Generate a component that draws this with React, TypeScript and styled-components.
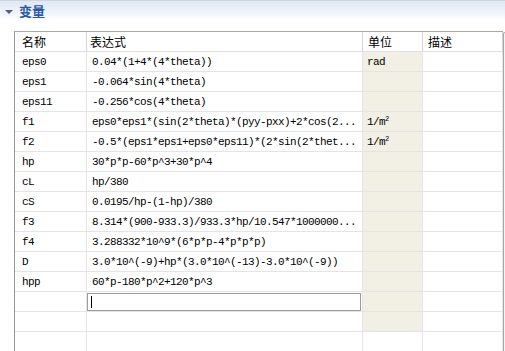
import * as React from "react";
import styled, { createGlobalStyle } from "styled-components";

const GlobalStyle = createGlobalStyle`
	html, body {
		margin: 0;
		padding: 0;
		background: #ffffff;
	}
	body {
		width: 505px;
		height: 351px;
		overflow: hidden;
		font-family: "Noto Sans CJK SC", "DejaVu Sans", sans-serif;
	}
`;

const Page = styled.div`
	width: 505px;
	height: 351px;
	overflow: hidden;
	display: flex;
	flex-direction: column;
`;

const SectionBar = styled.div`
	height: 21px;
	flex: none;
	display: flex;
	align-items: center;
	gap: 6px;
	padding-left: 5px;
	border-top: 1px solid #cbd6e3;
	background: linear-gradient(to bottom, #dfe8f4 0%, #eef3f9 55%, #ffffff 100%);
	box-sizing: border-box;
`;

const Arrow = styled.span`
	width: 0;
	height: 0;
	border-left: 4px solid transparent;
	border-right: 4px solid transparent;
	border-top: 4px solid #50627a;
	margin-top: 1px;
`;

const Title = styled.span`
	font-size: 13px;
	font-weight: bold;
	color: #2a58a8;
	line-height: 14px;
`;

const Body = styled.div`
	flex: 1;
	display: flex;
	padding: 10px 0 0 14px;
	min-height: 0;
`;

const Grid = styled.div`
	display: flex;
	flex-direction: column;
	border-left: 1px solid #9a9a9a;
	border-top: 1px solid #a9a9a9;
`;

const Row = styled.div`
	display: flex;
	height: 19px;
	border-bottom: 1px solid #e4e4e4;
	flex: none;
`;

const HeadRow = styled(Row)`
	border-bottom-color: #e0e0e0;
`;

const HeadCell = styled.div<{ $w: number; $pad: number }>`
	width: ${(p) => p.$w}px;
	box-sizing: border-box;
	border-right: 1px solid #d4d4d4;
	padding-left: ${(p) => p.$pad}px;
	font-size: 12px;
	line-height: 19px;
	color: #000;
	white-space: nowrap;
`;

const Cell = styled.div<{ $w: number; $pad: number; $shade?: boolean }>`
	width: ${(p) => p.$w}px;
	box-sizing: border-box;
	border-right: 1px solid #e6e6e6;
	padding-left: ${(p) => p.$pad}px;
	padding-top: 1px;
	background: ${(p) => (p.$shade ? "#f2efe5" : "transparent")};
	font-family: "Liberation Mono", "DejaVu Sans Mono", monospace;
	font-size: 11px;
	letter-spacing: -0.6px;
	line-height: 18px;
	color: #000;
	white-space: nowrap;
	overflow: hidden;
	display: flex;
	align-items: center;
`;

const Text = styled.span`
	white-space: nowrap;
`;

const EditBox = styled.div`
	flex: 1;
	height: 18px;
	margin: 0 1px 0 -5px;
	box-sizing: border-box;
	border: 1px solid #9c9c9c;
	display: flex;
	align-items: center;
	padding-left: 3px;
	background: #fff;
`;

const Caret = styled.span`
	width: 1px;
	height: 12px;
	background: #000;
`;

const Sup = styled.sup`
	font-size: 7px;
	line-height: 0;
	vertical-align: 4px;
	letter-spacing: 0;
`;

const ScrollEdge = styled.div`
	width: 2px;
	margin-top: 1px;
	border-left: 1px solid #a6a6a6;
	border-top: 1px solid #a6a6a6;
	border-top-left-radius: 2px;
	background: #f4f4f4;
`;

const cols = [
	{ w: 72, hp: 7, bp: 7 },
	{ w: 276, hp: 3, bp: 5 },
	{ w: 60, hp: 5, bp: 4 },
	{ w: 80, hp: 5, bp: 4 },
];

const m2 = (
	<Text>
		1/m<Sup>2</Sup>
	</Text>
);

const rows: [string, string, React.ReactNode][] = [
	["eps0", "0.04*(1+4*(4*theta))", "rad"],
	["eps1", "-0.064*sin(4*theta)", ""],
	["eps11", "-0.256*cos(4*theta)", ""],
	["f1", "eps0*eps1*(sin(2*theta)*(pyy-pxx)+2*cos(2...", m2],
	["f2", "-0.5*(eps1*eps1+eps0*eps11)*(2*sin(2*thet...", m2],
	["hp", "30*p*p-60*p^3+30*p^4", ""],
	["cL", "hp/380", ""],
	["cS", "0.0195/hp-(1-hp)/380", ""],
	["f3", "8.314*(900-933.3)/933.3*hp/10.547*1000000...", ""],
	["f4", "3.288332*10^9*(6*p*p-4*p*p*p)", ""],
	["D", "3.0*10^(-9)+hp*(3.0*10^(-13)-3.0*10^(-9))", ""],
	["hpp", "60*p-180*p^2+120*p^3", ""],
];

export default function App() {
	return (
		<Page>
			<GlobalStyle />
			<SectionBar>
				<Arrow />
				<Title>变量</Title>
			</SectionBar>
			<Body>
				<Grid>
					<HeadRow>
						<HeadCell $w={cols[0].w} $pad={cols[0].hp}>名称</HeadCell>
						<HeadCell $w={cols[1].w} $pad={cols[1].hp}>表达式</HeadCell>
						<HeadCell $w={cols[2].w} $pad={cols[2].hp}>单位</HeadCell>
						<HeadCell $w={cols[3].w} $pad={cols[3].hp}>描述</HeadCell>
					</HeadRow>
					{rows.map(([name, expr, unit]) => (
						<Row key={name}>
							<Cell $w={cols[0].w} $pad={cols[0].bp}>{name}</Cell>
							<Cell $w={cols[1].w} $pad={cols[1].bp}>{expr}</Cell>
							<Cell $w={cols[2].w} $pad={cols[2].bp} $shade>{unit}</Cell>
							<Cell $w={cols[3].w} $pad={cols[3].bp} />
						</Row>
					))}
					<Row>
						<Cell $w={cols[0].w} $pad={cols[0].bp} />
						<Cell $w={cols[1].w} $pad={cols[1].bp}>
							<EditBox>
								<Caret />
							</EditBox>
						</Cell>
						<Cell $w={cols[2].w} $pad={cols[2].bp} $shade />
						<Cell $w={cols[3].w} $pad={cols[3].bp} />
					</Row>
					<Row>
						<Cell $w={cols[0].w} $pad={cols[0].bp} />
						<Cell $w={cols[1].w} $pad={cols[1].bp} />
						<Cell $w={cols[2].w} $pad={cols[2].bp} $shade />
						<Cell $w={cols[3].w} $pad={cols[3].bp} />
					</Row>
					<Row>
						<Cell $w={cols[0].w} $pad={cols[0].bp} />
						<Cell $w={cols[1].w} $pad={cols[1].bp} />
						<Cell $w={cols[2].w} $pad={cols[2].bp} />
						<Cell $w={cols[3].w} $pad={cols[3].bp} />
					</Row>
				</Grid>
				<ScrollEdge />
			</Body>
		</Page>
	);
}
